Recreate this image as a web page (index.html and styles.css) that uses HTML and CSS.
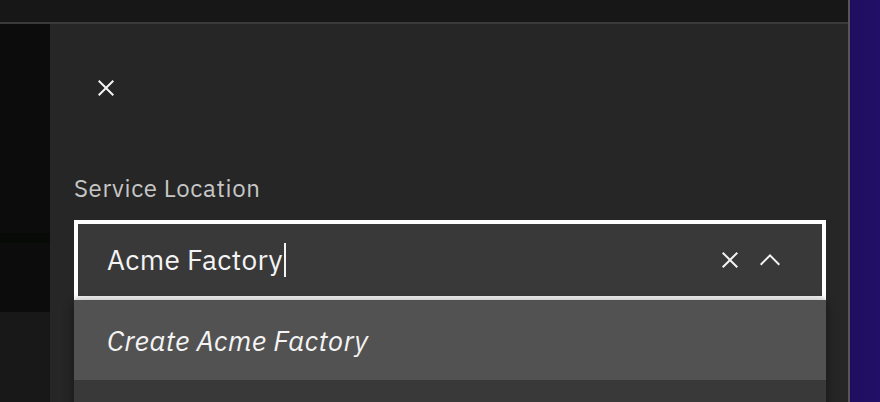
FILE: index.html
```html
<!DOCTYPE html>
<html lang="en">
<head>
<meta charset="utf-8">
<title>Service Location</title>
<link rel="stylesheet" href="styles.css">
</head>
<body>
<div class="screen">
  <div class="app">
    <div class="topbar"></div>
    <div class="workspace">
      <div class="side">
        <div class="side-top"><div class="side-accent"></div></div>
        <div class="side-bottom"></div>
      </div>
      <div class="panel">
        <button class="close-btn" aria-label="Close">
          <svg viewBox="0 0 32 32" width="32" height="32"><path d="M24 9.4L22.6 8 16 14.6 9.4 8 8 9.4 14.6 16 8 22.6 9.4 24 16 17.4 22.6 24 24 22.6 17.4 16 24 9.4z"/></svg>
        </button>
        <label class="field-label">Service Location</label>
        <div class="combo">
          <div class="combo-field">
            <span class="combo-value">Acme Factory</span><span class="caret"></span>
            <span class="combo-icons">
              <span class="icon-btn"><svg viewBox="0 0 32 32" width="32" height="32"><path d="M24 9.4L22.6 8 16 14.6 9.4 8 8 9.4 14.6 16 8 22.6 9.4 24 16 17.4 22.6 24 24 22.6 17.4 16 24 9.4z"/></svg></span>
              <span class="icon-btn"><svg viewBox="0 0 32 32" width="32" height="32"><path d="M16 10L26 20 24.6 21.4 16 12.8 7.4 21.4 6 20z"/></svg></span>
            </span>
          </div>
          <div class="menu">
            <div class="menu-item active">Create Acme Factory</div>
            <div class="menu-item"></div>
          </div>
        </div>
      </div>
    </div>
  </div>
  <div class="edge"></div>
  <div class="backdrop"></div>
</div>
</body>
</html>
```
FILE: styles.css
```css
* { box-sizing: border-box; }
html, body { margin: 0; padding: 0; height: 100%; }
body {
  background: #161616;
  font-family: "IBM Plex Sans", "Noto Sans", "Open Sans", sans-serif;
  overflow: hidden;
}
.screen {
  display: flex;
  width: 880px;
  height: 402px;
  overflow: hidden;
}
.app {
  flex: 0 0 848px;
  display: flex;
  flex-direction: column;
  overflow: hidden;
}
.topbar {
  flex: 0 0 24px;
  background: #171717;
  border-bottom: 2px solid #393939;
}
.workspace {
  flex: 1;
  display: flex;
  min-height: 0;
  overflow: hidden;
}
.side {
  flex: 0 0 50px;
  display: flex;
  flex-direction: column;
}
.side-top {
  height: 288px;
  background: #0c0c0c;
  padding-top: 209px;
}
.side-accent {
  height: 10px;
  background: #070a07;
}
.side-bottom {
  flex: 1;
  background: #181818;
}
.panel {
  flex: 1;
  background: #262626;
  padding: 48px 22px 0 24px;
  display: flex;
  flex-direction: column;
  align-items: flex-start;
  overflow: hidden;
}
.close-btn {
  flex: 0 0 auto;
  width: 32px;
  height: 32px;
  margin-left: 16px;
  padding: 0;
  border: 0;
  background: transparent;
  display: flex;
}
.close-btn svg, .icon-btn svg { fill: #f4f4f4; display: block; }
.field-label {
  margin-top: 69px;
  margin-bottom: 17px;
  font-size: 24px;
  line-height: 30px;
  letter-spacing: 0.64px;
  color: #c6c6c6;
}
.combo {
  align-self: stretch;
  position: relative;
}
.combo-field {
  height: 80px;
  background: #393939;
  border: 4px solid #ffffff;
  border-bottom-color: #f0f0f0;
  display: flex;
  align-items: center;
  padding: 0 36px 0 29px;
}
.combo-value {
  font-size: 28px;
  color: #f4f4f4;
  letter-spacing: 0.32px;
  line-height: 34px;
}
.caret {
  width: 2px;
  height: 34px;
  background: #f4f4f4;
  margin-left: 1px;
}
.combo-icons {
  margin-left: auto;
  display: flex;
  gap: 8px;
}
.icon-btn { display: flex; width: 32px; height: 32px; }
.menu {
  box-shadow: 0 3px 10px rgba(0, 0, 0, 0.45);
}
.menu-item {
  height: 80px;
  background: #393939;
  display: flex;
  align-items: center;
  padding-left: 33px;
  font-size: 28px;
  font-style: italic;
  color: #f4f4f4;
  letter-spacing: 0.32px;
}
.menu-item.active { background: #525252; }
.edge {
  flex: 0 0 2px;
  background: #565656;
}
.backdrop {
  flex: 1;
  background: linear-gradient(90deg, #1f0e60, #220f66);
}
```
